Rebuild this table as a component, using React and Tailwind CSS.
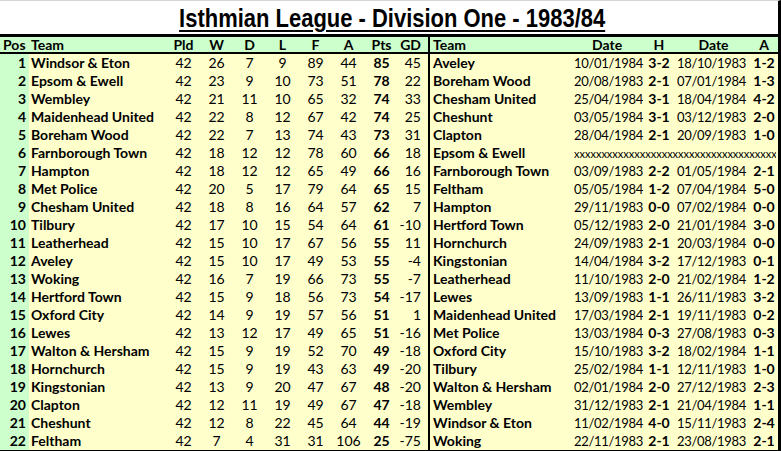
const league = [
  [1, "Windsor & Eton", 42, 26, 7, 9, 89, 44, 85, 45],
  [2, "Epsom & Ewell", 42, 23, 9, 10, 73, 51, 78, 22],
  [3, "Wembley", 42, 21, 11, 10, 65, 32, 74, 33],
  [4, "Maidenhead United", 42, 22, 8, 12, 67, 42, 74, 25],
  [5, "Boreham Wood", 42, 22, 7, 13, 74, 43, 73, 31],
  [6, "Farnborough Town", 42, 18, 12, 12, 78, 60, 66, 18],
  [7, "Hampton", 42, 18, 12, 12, 65, 49, 66, 16],
  [8, "Met Police", 42, 20, 5, 17, 79, 64, 65, 15],
  [9, "Chesham United", 42, 18, 8, 16, 64, 57, 62, 7],
  [10, "Tilbury", 42, 17, 10, 15, 54, 64, 61, -10],
  [11, "Leatherhead", 42, 15, 10, 17, 67, 56, 55, 11],
  [12, "Aveley", 42, 15, 10, 17, 49, 53, 55, -4],
  [13, "Woking", 42, 16, 7, 19, 66, 73, 55, -7],
  [14, "Hertford Town", 42, 15, 9, 18, 56, 73, 54, -17],
  [15, "Oxford City", 42, 14, 9, 19, 57, 56, 51, 1],
  [16, "Lewes", 42, 13, 12, 17, 49, 65, 51, -16],
  [17, "Walton & Hersham", 42, 15, 9, 19, 52, 70, 49, -18],
  [18, "Hornchurch", 42, 15, 9, 19, 43, 63, 49, -20],
  [19, "Kingstonian", 42, 13, 9, 20, 47, 67, 48, -20],
  [20, "Clapton", 42, 12, 11, 19, 49, 67, 47, -18],
  [21, "Cheshunt", 42, 12, 8, 22, 45, 64, 44, -19],
  [22, "Feltham", 42, 7, 4, 31, 31, 106, 25, -75],
];

const results = [
  ["Aveley", "10/01/1984", "3-2", "18/10/1983", "1-2"],
  ["Boreham Wood", "20/08/1983", "2-1", "07/01/1984", "1-3"],
  ["Chesham United", "25/04/1984", "3-1", "18/04/1984", "4-2"],
  ["Cheshunt", "03/05/1984", "3-1", "03/12/1983", "2-0"],
  ["Clapton", "28/04/1984", "2-1", "20/09/1983", "1-0"],
  ["Epsom & Ewell", null],
  ["Farnborough Town", "03/09/1983", "2-2", "01/05/1984", "2-1"],
  ["Feltham", "05/05/1984", "1-2", "07/04/1984", "5-0"],
  ["Hampton", "29/11/1983", "0-0", "07/02/1984", "0-0"],
  ["Hertford Town", "05/12/1983", "2-0", "21/01/1984", "3-0"],
  ["Hornchurch", "24/09/1983", "2-1", "20/03/1984", "0-0"],
  ["Kingstonian", "14/04/1984", "3-2", "17/12/1983", "0-1"],
  ["Leatherhead", "11/10/1983", "2-0", "21/02/1984", "1-2"],
  ["Lewes", "13/09/1983", "1-1", "26/11/1983", "3-2"],
  ["Maidenhead United", "17/03/1984", "2-1", "19/11/1983", "0-2"],
  ["Met Police", "13/03/1984", "0-3", "27/08/1983", "0-3"],
  ["Oxford City", "15/10/1983", "3-2", "18/02/1984", "1-1"],
  ["Tilbury", "25/02/1984", "1-1", "12/11/1983", "1-0"],
  ["Walton & Hersham", "02/01/1984", "2-0", "27/12/1983", "2-3"],
  ["Wembley", "31/12/1983", "2-1", "21/04/1984", "1-1"],
  ["Windsor & Eton", "11/02/1984", "4-0", "15/11/1983", "2-4"],
  ["Woking", "22/11/1983", "2-1", "23/08/1983", "2-1"],
];

const num = "w-[33px] text-center";

function LeftRow({ r }) {
  const [pos, team, pld, w, d, l, f, a, pts, gd] = r;
  return (
    <div className="flex h-[18px] items-center">
      <div className="w-[29px] h-full flex items-center justify-end pr-[3px] bg-[#ccffcc] font-bold">{pos}</div>
      <div className="w-[138px] pl-[2px] font-bold whitespace-nowrap">{team}</div>
      <div className={num}>{pld}</div>
      <div className={num}>{w}</div>
      <div className={num}>{d}</div>
      <div className={num}>{l}</div>
      <div className={num}>{f}</div>
      <div className={num}>{a}</div>
      <div className={`${num} font-bold`}>{pts}</div>
      <div className="w-[30px] text-right pr-[7px]">{gd}</div>
    </div>
  );
}

function RightRow({ r }) {
  const [team, d1, h, d2, a] = r;
  return (
    <div className="flex h-[18px] items-center">
      <div className="w-[144px] pl-[3px] font-bold whitespace-nowrap">{team}</div>
      {d1 ? (
        <>
          <div className="w-[72px] text-[13px] tracking-[-0.3px] whitespace-nowrap">{d1}</div>
          <div className="w-[26px] text-center font-bold">{h}</div>
          <div className="w-[78px] pl-[5px] text-[13px] tracking-[-0.3px] whitespace-nowrap">{d2}</div>
          <div className="w-[28px] text-center font-bold">{a}</div>
        </>
      ) : (
        <div className="w-[202px] text-[11px] overflow-hidden whitespace-nowrap">
          {"x".repeat(37)}
        </div>
      )}
    </div>
  );
}

export default function App() {
  return (
    <div className="w-[781px] h-[451px] bg-white text-black text-[14px] leading-none font-['Lato','Open_Sans',sans-serif] border-t border-[#d4d4d4] border-r-[3px] border-r-black">
      <div className="h-[33px] flex justify-center items-start pt-[4px]">
        <h1 className="font-['Liberation_Sans',sans-serif] font-bold text-[26px] underline underline-offset-[3px] decoration-[2px] scale-x-[0.845] translate-x-[3px] whitespace-nowrap">
          Isthmian League - Division One - 1983/84
        </h1>
      </div>
      <div className="border-t-[3px] border-b-[2px] border-black bg-[#ccffcc] h-[20px] flex items-center font-bold">
        <div className="w-[29px] pl-[3px]">Pos</div>
        <div className="w-[138px] pl-[2px]">Team</div>
        <div className={num}>Pld</div>
        <div className={num}>W</div>
        <div className={num}>D</div>
        <div className={num}>L</div>
        <div className={num}>F</div>
        <div className={num}>A</div>
        <div className={num}>Pts</div>
        <div className="w-[30px] text-right pr-[7px]">GD</div>
        <div className="w-[2px] h-full bg-black" />
        <div className="w-[144px] pl-[3px]">Team</div>
        <div className="w-[72px] pl-[18px]">Date</div>
        <div className="w-[26px] text-center">H</div>
        <div className="w-[78px] text-center pl-[5px]">Date</div>
        <div className="w-[28px] text-center">A</div>
      </div>
      <div className="flex bg-[#ffffcc] border-b-[2px] border-black">
        <div className="w-[428px]">
          {league.map((r) => (
            <LeftRow key={r[0]} r={r} />
          ))}
        </div>
        <div className="w-[2px] bg-black" />
        <div className="flex-1">
          {results.map((r) => (
            <RightRow key={r[0]} r={r} />
          ))}
        </div>
      </div>
    </div>
  );
}
